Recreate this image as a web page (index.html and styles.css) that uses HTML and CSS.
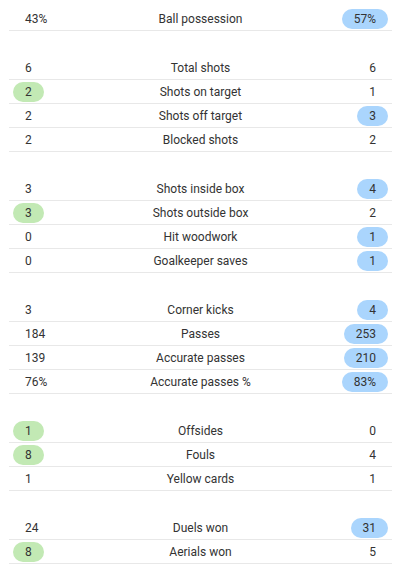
FILE: index.html
```html
<!DOCTYPE html>
<html lang="en">
<head>
  <meta charset="UTF-8">
  <meta name="viewport" content="width=device-width, initial-scale=1.0">
  <title>Match statistics</title>
  <link rel="stylesheet" href="styles.css">
</head>
<body>
  <div class="stats">
    <!-- Possession -->
    <div class="group">
      <div class="row"><div class="home"><span class="val">43%</span></div><div class="label">Ball possession</div><div class="away"><span class="val best-away">57%</span></div></div>
    </div>

    <!-- Shots -->
    <div class="group">
      <div class="row"><div class="home"><span class="val">6</span></div><div class="label">Total shots</div><div class="away"><span class="val">6</span></div></div>
      <div class="row"><div class="home"><span class="val best-home">2</span></div><div class="label">Shots on target</div><div class="away"><span class="val">1</span></div></div>
      <div class="row"><div class="home"><span class="val">2</span></div><div class="label">Shots off target</div><div class="away"><span class="val best-away">3</span></div></div>
      <div class="row"><div class="home"><span class="val">2</span></div><div class="label">Blocked shots</div><div class="away"><span class="val">2</span></div></div>
    </div>

    <!-- Shot details -->
    <div class="group">
      <div class="row"><div class="home"><span class="val">3</span></div><div class="label">Shots inside box</div><div class="away"><span class="val best-away">4</span></div></div>
      <div class="row"><div class="home"><span class="val best-home">3</span></div><div class="label">Shots outside box</div><div class="away"><span class="val">2</span></div></div>
      <div class="row"><div class="home"><span class="val">0</span></div><div class="label">Hit woodwork</div><div class="away"><span class="val best-away">1</span></div></div>
      <div class="row"><div class="home"><span class="val">0</span></div><div class="label">Goalkeeper saves</div><div class="away"><span class="val best-away">1</span></div></div>
    </div>

    <!-- Passing -->
    <div class="group">
      <div class="row"><div class="home"><span class="val">3</span></div><div class="label">Corner kicks</div><div class="away"><span class="val best-away">4</span></div></div>
      <div class="row"><div class="home"><span class="val">184</span></div><div class="label">Passes</div><div class="away"><span class="val best-away">253</span></div></div>
      <div class="row"><div class="home"><span class="val">139</span></div><div class="label">Accurate passes</div><div class="away"><span class="val best-away">210</span></div></div>
      <div class="row"><div class="home"><span class="val">76%</span></div><div class="label">Accurate passes %</div><div class="away"><span class="val best-away">83%</span></div></div>
    </div>

    <!-- Discipline -->
    <div class="group">
      <div class="row"><div class="home"><span class="val best-home">1</span></div><div class="label">Offsides</div><div class="away"><span class="val">0</span></div></div>
      <div class="row"><div class="home"><span class="val best-home">8</span></div><div class="label">Fouls</div><div class="away"><span class="val">4</span></div></div>
      <div class="row"><div class="home"><span class="val">1</span></div><div class="label">Yellow cards</div><div class="away"><span class="val">1</span></div></div>
    </div>

    <!-- Duels -->
    <div class="group">
      <div class="row"><div class="home"><span class="val">24</span></div><div class="label">Duels won</div><div class="away"><span class="val best-away">31</span></div></div>
      <div class="row"><div class="home"><span class="val best-home">8</span></div><div class="label">Aerials won</div><div class="away"><span class="val">5</span></div></div>
    </div>
  </div>
</body>
</html>
```

FILE: styles.css
```css
* {
  margin: 0;
  padding: 0;
  box-sizing: border-box;
}

body {
  background-color: #ffffff;
  font-family: Roboto, "Liberation Sans", sans-serif;
  font-size: 12px;
  color: #333333;
}

.stats {
  padding: 7px 8px 0 9px;
}

.group {
  margin-bottom: 25px;
}

.row {
  display: grid;
  grid-template-columns: 1fr auto 1fr;
  align-items: center;
  height: 24px;
  border-bottom: 1px solid #e8e8e8;
}

.home {
  padding-left: 4px;
}

.away {
  padding-right: 4px;
  text-align: right;
}

.label {
  text-align: center;
}

.val {
  display: inline-block;
  height: 20px;
  line-height: 20px;
  padding: 0 12px;
  border-radius: 10px;
}

.best-home {
  background-color: #c2e9b4;
}

.best-away {
  background-color: #aad5fd;
}
```
